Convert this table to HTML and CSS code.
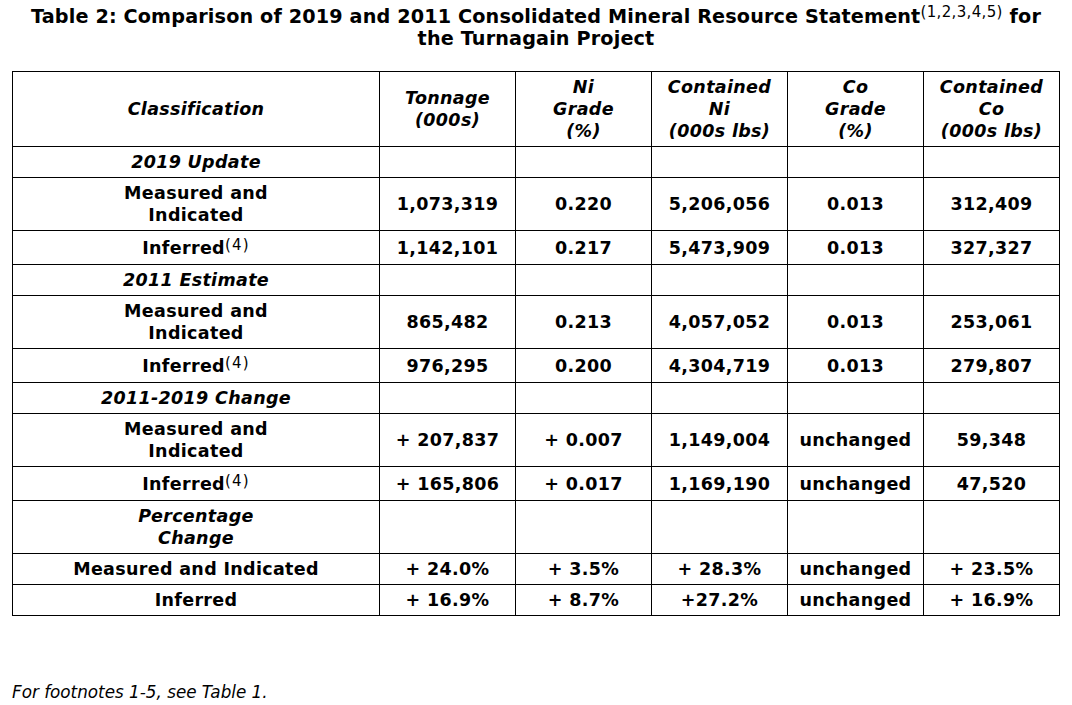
FILE: index.html
```html
<!DOCTYPE html>
<html>
<head>
<meta charset="utf-8">
<link rel="stylesheet" href="styles.css">
</head>
<body>
<div class="page">
  <h1 class="title">Table 2: Comparison of 2019 and 2011 Consolidated Mineral Resource Statement<sup class="tsup">(1,2,3,4,5)</sup> for<br>the Turnagain Project</h1>
  <table class="grid">
    <colgroup>
      <col class="c-class">
      <col class="c-num"><col class="c-num"><col class="c-num"><col class="c-num"><col class="c-num">
    </colgroup>
    <thead>
      <tr class="head">
        <th>Classification</th>
        <th>Tonnage<br>(000s)</th>
        <th>Ni<br>Grade<br>(%)</th>
        <th>Contained<br>Ni<br>(000s lbs)</th>
        <th>Co<br>Grade<br>(%)</th>
        <th>Contained<br>Co<br>(000s lbs)</th>
      </tr>
    </thead>
    <tbody>
      <tr class="sec"><td>2019 Update</td><td></td><td></td><td></td><td></td><td></td></tr>
      <tr><td>Measured and<br>Indicated</td><td>1,073,319</td><td>0.220</td><td>5,206,056</td><td>0.013</td><td>312,409</td></tr>
      <tr class="sp"><td>Inferred<sup class="fs">(4)</sup></td><td>1,142,101</td><td>0.217</td><td>5,473,909</td><td>0.013</td><td>327,327</td></tr>
      <tr class="sec"><td>2011 Estimate</td><td></td><td></td><td></td><td></td><td></td></tr>
      <tr><td>Measured and<br>Indicated</td><td>865,482</td><td>0.213</td><td>4,057,052</td><td>0.013</td><td>253,061</td></tr>
      <tr class="sp"><td>Inferred<sup class="fs">(4)</sup></td><td>976,295</td><td>0.200</td><td>4,304,719</td><td>0.013</td><td>279,807</td></tr>
      <tr class="sec"><td>2011-2019 Change</td><td></td><td></td><td></td><td></td><td></td></tr>
      <tr><td>Measured and<br>Indicated</td><td>+ 207,837</td><td>+ 0.007</td><td>1,149,004</td><td>unchanged</td><td>59,348</td></tr>
      <tr class="sp"><td>Inferred<sup class="fs">(4)</sup></td><td>+ 165,806</td><td>+ 0.017</td><td>1,169,190</td><td>unchanged</td><td>47,520</td></tr>
      <tr class="sec"><td>Percentage<br>Change</td><td></td><td></td><td></td><td></td><td></td></tr>
      <tr><td>Measured and Indicated</td><td>+ 24.0%</td><td>+ 3.5%</td><td>+ 28.3%</td><td>unchanged</td><td>+ 23.5%</td></tr>
      <tr><td>Inferred</td><td>+ 16.9%</td><td>+ 8.7%</td><td>+27.2%</td><td>unchanged</td><td>+ 16.9%</td></tr>
    </tbody>
  </table>
  <p class="note">For footnotes 1-5, see Table 1.</p>
</div>
</body>
</html>
```

FILE: styles.css
```css
html, body {
  margin: 0;
  padding: 0;
  background: #ffffff;
  color: #000000;
  font-family: "DejaVu Sans", Verdana, sans-serif;
}

.page {
  width: 1048px;
  padding: 6px 12px 0 12px;
}

.title {
  margin: 0 0 21px 0;
  font-size: 19.2px;
  letter-spacing: 0.15px;
  line-height: 22px;
  font-weight: bold;
  text-align: center;
}

.tsup {
  font-size: 15px;
  letter-spacing: 0.35px;
  font-weight: normal;
  line-height: 0;
  vertical-align: 6.5px;
}

.grid {
  width: 1048px;
  table-layout: fixed;
  border-collapse: collapse;
  font-size: 17.5px;
  letter-spacing: 0.33px;
  line-height: 22px;
  font-weight: bold;
}

.c-class { width: 367px; }
.c-num { width: 136px; }

.grid th,
.grid td {
  border: 1px solid #000000;
  padding: 4px 2px;
  text-align: center;
  vertical-align: middle;
  white-space: nowrap;
}

.grid th {
  font-style: italic;
}

.sec td:first-child {
  font-style: italic;
}

.sp td {
  padding-top: 5.5px;
  padding-bottom: 5.5px;
}

.fs {
  font-size: 15px;
  letter-spacing: 1.2px;
  font-weight: normal;
  line-height: 0;
  vertical-align: 4px;
}

.note {
  margin: 65px 0 0 0;
  font-size: 16.8px;
  line-height: 22px;
  font-style: italic;
}
```
